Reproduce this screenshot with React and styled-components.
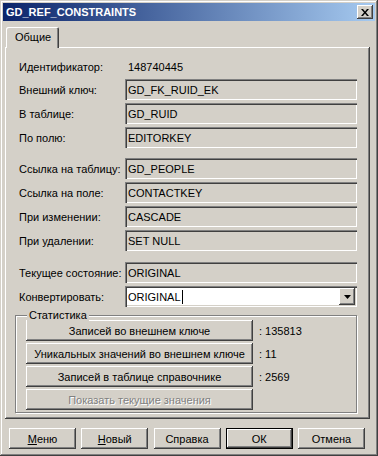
import React from 'react';
import styled, { createGlobalStyle, css } from 'styled-components';

const Global = createGlobalStyle`
  html, body { margin: 0; padding: 0; background: #D4D0C8; }
  body { font-family: "Liberation Sans", Arial, sans-serif; font-size: 11px; color: #000; }
  * { box-sizing: border-box; }
`;

const raised = css`
  box-shadow: inset -1px -1px 0 #404040, inset 1px 1px 0 #ffffff,
    inset -2px -2px 0 #808080, inset 2px 2px 0 #D4D0C8;
`;

const Window = styled.div`
  width: 378px;
  height: 456px;
  background: #D4D0C8;
  padding: 3px;
  display: flex;
  flex-direction: column;
  box-shadow: inset -1px -1px 0 #404040, inset 1px 1px 0 #D4D0C8,
    inset -2px -2px 0 #808080, inset 2px 2px 0 #ffffff;
`;

const TitleBar = styled.div`
  height: 18px;
  display: flex;
  align-items: center;
  justify-content: space-between;
  padding: 0 2px 0 3px;
  background: linear-gradient(to right, #0A246A, #A6CAF0);
  color: #fff;
  font-weight: bold;
  font-size: 11px;
`;

const CloseButton = styled.div`
  width: 16px;
  height: 14px;
  background: #D4D0C8;
  display: flex;
  align-items: center;
  justify-content: center;
  ${raised}
`;

const Body = styled.div`
  flex: 1;
  display: flex;
  flex-direction: column;
  padding: 6px 5px 4px 2px;
`;

const TabStrip = styled.div`
  display: flex;
  position: relative;
  z-index: 1;
  margin-bottom: -1px;
`;

const Tab = styled.div`
  height: 21px;
  padding: 4px 8px 0 9px;
  margin-left: 1px;
  background: #D4D0C8;
  border-radius: 2px 2px 0 0;
  box-shadow: inset 1px 1px 0 #ffffff, inset -1px 0 0 #404040, inset -2px 0 0 #808080;
`;

const Panel = styled.div`
  flex: 1;
  display: flex;
  flex-direction: column;
  padding: 11px 13px 0 14px;
  box-shadow: inset -1px -1px 0 #404040, inset 1px 1px 0 #ffffff,
    inset -2px -2px 0 #808080;
`;

const Section = styled.div`
  display: grid;
  grid-template-columns: 106px 232px;
  row-gap: 3px;
  margin-top: ${p => p.$mt || 0}px;
`;

const Label = styled.div`
  height: ${p => p.$h || 21}px;
  display: flex;
  align-items: center;
  white-space: nowrap;
`;

const Value = styled.div`
  height: ${p => p.$h || 21}px;
  display: flex;
  align-items: center;
  padding-left: 3px;
`;

const Field = styled.div`
  height: 21px;
  display: flex;
  align-items: center;
  padding: 0 3px;
  background: ${p => (p.$white ? '#ffffff' : '#D4D0C8')};
  box-shadow: inset 1px 1px 0 #808080, inset 2px 2px 0 #404040,
    inset -1px -1px 0 #ffffff, inset -2px -2px 0 #D4D0C8;
  white-space: nowrap;
`;

const ComboText = styled.div`
  flex: 1;
  display: flex;
  align-items: center;
`;

const Caret = styled.span`
  display: inline-block;
  width: 1px;
  height: 14px;
  background: #000;
  margin-left: 1px;
`;

const DropButton = styled.div`
  width: 16px;
  height: 17px;
  margin-right: -1px;
  background: #D4D0C8;
  display: flex;
  align-items: center;
  justify-content: center;
  ${raised}
`;

const GroupBox = styled.div`
  position: relative;
  margin: 8px 0 0 -4px;
  width: 342px;
  padding: 4px 9px 2px 10px;
  border: 1px solid #808080;
  box-shadow: inset 1px 1px 0 #ffffff, 1px 1px 0 #ffffff;
  display: grid;
  grid-template-columns: 227px auto;
  column-gap: 6px;
  row-gap: 2px;
`;

const Legend = styled.span`
  position: absolute;
  top: -7px;
  left: 11px;
  padding: 0 2px;
  line-height: 13px;
  background: #D4D0C8;
`;

const Button = styled.div`
  height: 21px;
  display: flex;
  align-items: center;
  justify-content: center;
  background: #D4D0C8;
  white-space: nowrap;
  color: ${p => (p.$disabled ? '#808080' : '#000')};
  text-shadow: ${p => (p.$disabled ? '1px 1px 0 #ffffff' : 'none')};
  ${raised}
  ${p =>
    p.$default &&
    css`
      box-shadow: inset 0 0 0 1px #000, inset -2px -2px 0 #404040,
        inset 2px 2px 0 #ffffff, inset -3px -3px 0 #808080;
    `}
`;

const StatValue = styled.div`
  height: 21px;
  display: flex;
  align-items: center;
  white-space: pre;
`;

const ButtonBar = styled.div`
  display: flex;
  justify-content: space-between;
  padding: 9px 5px 0 4px;
`;

const BarButton = styled(Button)`
  width: 67px;
`;

const Mnemonic = styled.u`
  text-decoration: underline;
  text-underline-offset: 1px;
`;

const fields1 = [
  ['Внешний ключ:', 'GD_FK_RUID_EK'],
  ['В таблице:', 'GD_RUID'],
  ['По полю:', 'EDITORKEY'],
];
const fields2 = [
  ['Ссылка на таблицу:', 'GD_PEOPLE'],
  ['Ссылка на поле:', 'CONTACTKEY'],
  ['При изменении:', 'CASCADE'],
  ['При удалении:', 'SET NULL'],
];

const stats = [
  ['Записей во внешнем ключе', ': 135813'],
  ['Уникальных значений во внешнем ключе', ': 11'],
  ['Записей в таблице справочнике', ': 2569'],
];

export default function App() {
  return (
    <>
      <Global />
      <Window>
        <TitleBar>
          <span>GD_REF_CONSTRAINTS</span>
          <CloseButton>
            <svg width="8" height="7" viewBox="0 0 8 7">
              <path d="M0 0h2l2 2.5L6 0h2L5 3.5 8 7H6L4 4.5 2 7H0l3-3.5z" fill="#000" />
            </svg>
          </CloseButton>
        </TitleBar>
        <Body>
          <TabStrip>
            <Tab>Общие</Tab>
          </TabStrip>
          <Panel>
            <Section>
              <Label $h={18}>Идентификатор:</Label>
              <Value $h={18}>148740445</Value>
              {fields1.map(([l, v]) => (
                <React.Fragment key={l}>
                  <Label>{l}</Label>
                  <Field>{v}</Field>
                </React.Fragment>
              ))}
            </Section>
            <Section $mt={10}>
              {fields2.map(([l, v]) => (
                <React.Fragment key={l}>
                  <Label>{l}</Label>
                  <Field>{v}</Field>
                </React.Fragment>
              ))}
            </Section>
            <Section $mt={11}>
              <Label>Текущее состояние:</Label>
              <Field>ORIGINAL</Field>
              <Label>Конвертировать:</Label>
              <Field $white>
                <ComboText>
                  ORIGINAL
                  <Caret />
                </ComboText>
                <DropButton>
                  <svg width="7" height="4" viewBox="0 0 7 4">
                    <path d="M0 0h7L3.5 4z" fill="#000" />
                  </svg>
                </DropButton>
              </Field>
            </Section>
            <GroupBox>
              <Legend>Статистика</Legend>
              {stats.map(([b, v]) => (
                <React.Fragment key={b}>
                  <Button>{b}</Button>
                  <StatValue>{v}</StatValue>
                </React.Fragment>
              ))}
              <Button $disabled>Показать текущие значения</Button>
              <StatValue />
            </GroupBox>
          </Panel>
          <ButtonBar>
            <BarButton>
              <span><Mnemonic>М</Mnemonic>еню</span>
            </BarButton>
            <BarButton>
              <span><Mnemonic>Н</Mnemonic>овый</span>
            </BarButton>
            <BarButton>Справка</BarButton>
            <BarButton $default>ОК</BarButton>
            <BarButton>Отмена</BarButton>
          </ButtonBar>
        </Body>
      </Window>
    </>
  );
}
